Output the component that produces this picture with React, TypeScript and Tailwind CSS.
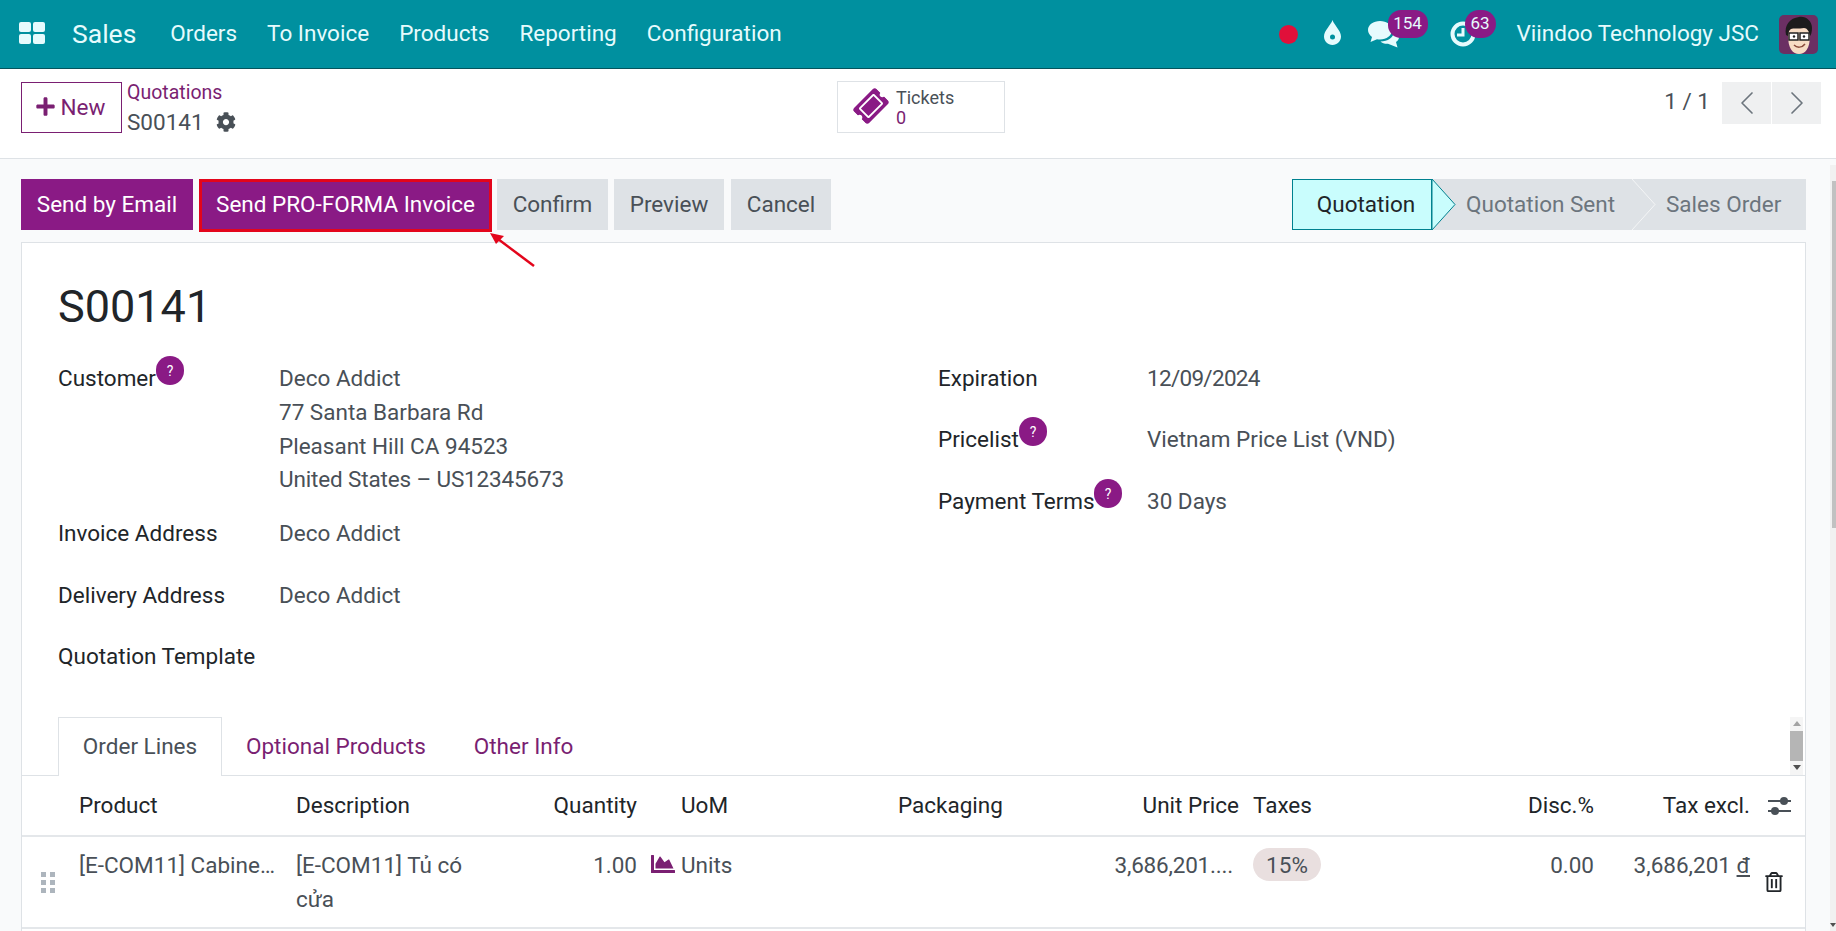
import { ChevronLeft, ChevronRight } from "lucide-react";
import { FaChartArea, FaCog, FaPlus, FaRegTrashAlt, FaTicketAlt } from "react-icons/fa";

const menus = ["Orders", "To Invoice", "Products", "Reporting", "Configuration"];

const columns =
  "grid grid-cols-[49px_217px_252px_105px_245px_170px_187px_254px_101px_156px_1fr]";

const HelpDot = ({ className }: { className: string }) => (
  <span
    className={`absolute flex h-[29px] w-[28px] items-center justify-center rounded-full bg-[#8a1a85] text-[14px] leading-none text-white ${className}`}
  >
    ?
  </span>
);

const Field = ({
  label,
  labelWidth,
  help,
  className,
  children,
}: {
  label: string;
  labelWidth: string;
  help?: string;
  className?: string;
  children?: React.ReactNode;
}) => (
  <div className={`flex h-[35px] leading-[35px] ${className ?? ""}`}>
    <div className={`relative shrink-0 text-[#212529] ${labelWidth}`}>
      {label}
      {help && <HelpDot className={help} />}
    </div>
    <div className="text-[#495057]">{children}</div>
  </div>
);

const AppsIcon = () => (
  <svg width="26" height="23" viewBox="0 0 26 23" fill="#e6fbfd">
    <rect x="0" y="0" width="12" height="10" rx="2" />
    <rect x="14" y="0" width="12" height="10" rx="2" />
    <rect x="0" y="12" width="12" height="10" rx="2" />
    <rect x="14" y="12" width="12" height="10" rx="2" />
  </svg>
);

const DropIcon = () => (
  <svg width="19" height="25" viewBox="0 0 19 25">
    <path
      fill="#e6fbfd"
      d="M9.5 0C11 5 18 10.500 18 16.500 18 21.200 14.200 25 9.500 25S1 21.200 1 16.500C1 10.500 8 5 9.500 0Z"
    />
    <circle cx="9.500" cy="17" r="2.500" fill="#00909f" />
  </svg>
);

const ChatIcon = () => (
  <svg width="32" height="28" viewBox="0 0 32 28" fill="#e6fbfd">
    <path d="M12 1C5.500 1 0 4.800 0 10 0 12.800 1.600 15.200 4 17L2.500 22 9 19.200C10 19.400 11 19.500 12 19.500 18.500 19.500 24 15.500 24 10S18.500 1 12 1Z" />
    <path d="M26 11C26 17.500 19.500 21.500 12.500 21.500 14 23 17 24 20 23.800L29.500 27.500 28 22C30 20.800 31 19 31 17.200 31 14.800 29 12.500 26 11Z" />
  </svg>
);

const ClockIcon = () => (
  <svg width="26" height="26" viewBox="0 0 26 26" fill="none" stroke="#e6fbfd">
    <circle cx="13" cy="13" r="10.500" strokeWidth="4" />
    <path d="M13 7v7H7" strokeWidth="3" />
  </svg>
);

const Avatar = () => (
  <svg width="39" height="39" viewBox="0 0 39 39" className="rounded-[5px]">
    <rect width="39" height="39" fill="#6b2f63" />
    <path d="M9 20C9 34 14 39 20 39S31 34 31 20 9 8 9 20Z" fill="#f7dcc4" />
    <path
      d="M7 20C5 10 11 3 20 2 27 1 33 6 33 13 33 17 32 20 31 21 30 16 28 13 25 13 20 14 14 13 12 14 10 15 9 18 9 21Z"
      fill="#1c1c1c"
    />
    <g fill="#fff" stroke="#222" strokeWidth="1.500">
      <rect x="10" y="18" width="9" height="7" />
      <rect x="21" y="18" width="9" height="7" />
    </g>
    <circle cx="15" cy="21.500" r="1.200" fill="#222" />
    <circle cx="25" cy="21.500" r="1.200" fill="#222" />
    <path d="M15 30C18 33 23 33 26 29" fill="none" stroke="#8a4a3a" strokeWidth="1.500" />
  </svg>
);

const Sliders = () => (
  <svg width="23" height="20" viewBox="0 0 23 20" fill="#495057">
    <rect x="0" y="4" width="23" height="2" />
    <rect x="0" y="14" width="23" height="2" />
    <circle cx="16" cy="5" r="4" />
    <circle cx="7" cy="15" r="4" />
  </svg>
);

const Grip = () => (
  <svg width="14" height="21" viewBox="0 0 14 21" fill="#adb5bd">
    <rect x="0" y="0" width="5" height="5" />
    <rect x="9" y="0" width="5" height="5" />
    <rect x="0" y="8" width="5" height="5" />
    <rect x="9" y="8" width="5" height="5" />
    <rect x="0" y="16" width="5" height="5" />
    <rect x="9" y="16" width="5" height="5" />
  </svg>
);

export default function App() {
  return (
    <div className="flex h-[931px] w-[1836px] flex-col overflow-hidden bg-[#f9fafb] font-['Roboto',sans-serif] text-[22.5px] text-[#212529]">
      {/* top bar */}
      <header className="flex h-[69px] shrink-0 items-center border-b border-[#05545d] bg-[#00909f] text-[#e6fbfd]">
        <div className="ml-[19px] mr-[27px] -mt-[2px]">
          <AppsIcon />
        </div>
        <span className="mr-[34px] text-[26.500px]">Sales</span>
        <nav className="flex gap-[30px]">
          {menus.map((m) => (
            <span key={m}>{m}</span>
          ))}
        </nav>
        <div className="ml-auto flex items-center">
          <span className="mr-[25px] h-[19px] w-[19px] rounded-full bg-[#e0103a]" />
          <span className="mr-[26px] -mt-[3px]">
            <DropIcon />
          </span>
          <span className="relative mr-[50px]">
            <ChatIcon />
            <span className="absolute -top-[10px] left-[20px] flex h-[28px] w-[40px] items-center justify-center rounded-[13px] bg-[#8a1a85] text-[17px]">
              154
            </span>
          </span>
          <span className="relative mr-[41px]">
            <ClockIcon />
            <span className="absolute -top-[11px] left-[15px] flex h-[28px] w-[31px] items-center justify-center rounded-full bg-[#8a1a85] text-[17px]">
              63
            </span>
          </span>
          <span className="mr-[20px]">Viindoo Technology JSC</span>
          <span className="mr-[18px] flex">
            <Avatar />
          </span>
        </div>
      </header>

      {/* control panel */}
      <div className="flex h-[90px] shrink-0 items-start border-b border-[#dee2e6] bg-white pl-[21px] pr-[15px] pt-[13px]">
        <button className="flex h-[51px] w-[101px] items-center justify-center gap-[5px] border border-[#7a1f72] text-[#7a1f72]">
          <FaPlus size={21} className="-mt-[2px] -ml-[3px]" />
          New
        </button>
        <div className="ml-[5px] w-[100px] -mt-[1px]">
          <div className="text-[19.500px] leading-[24px] text-[#7a1f72]">Quotations</div>
          <div className="mt-[3px] flex items-center gap-[12px] whitespace-nowrap leading-[28px] text-[#495057]">
            S00141
            <FaCog size={20} className="shrink-0" />
          </div>
        </div>
        <button className="ml-[610px] -mt-[1px] flex h-[52px] w-[168px] items-center border border-[#dee2e6] pl-[17px] text-left">
          <FaTicketAlt size={32} color="#8a1a85" className="-mt-[2px] -rotate-45" />
          <span className="ml-[9px] mt-[2px] text-[18px] leading-[20px] text-[#495057]">
            Tickets
            <span className="block text-[#7a1f72]">0</span>
          </span>
        </button>
        <span className="ml-auto mr-[12px] mt-[3px] text-[#495057]">1 / 1</span>
        <div className="flex h-[42px] gap-[1px]">
          <span className="flex w-[49px] items-center justify-center bg-[#eff0f1]">
            <ChevronLeft size={40} strokeWidth={1} color="#6c757d" />
          </span>
          <span className="flex w-[49px] items-center justify-center bg-[#eff0f1]">
            <ChevronRight size={40} strokeWidth={1} color="#6c757d" />
          </span>
        </div>
      </div>

      <div className="relative flex-1 px-[21px] pr-[30px] pt-[20px]">
        {/* action buttons and status */}
        <div className="flex h-[51px] items-stretch">
          <button className="w-[172px] bg-[#8a1a85] text-white">Send by Email</button>
          <button className="ml-[6px] h-[53px] w-[293px] border-[3px] border-[#e3051b] bg-[#8a1a85] pb-[2px] text-white">
            Send PRO-FORMA Invoice
          </button>
          <button className="ml-[5px] w-[111px] bg-[#dee2e6] text-[#495057]">Confirm</button>
          <button className="ml-[6px] w-[110px] bg-[#dee2e6] text-[#495057]">Preview</button>
          <button className="ml-[7px] w-[100px] bg-[#dee2e6] text-[#495057]">Cancel</button>
          <div className="relative ml-auto flex w-[514px] items-center bg-[#dee2e6] text-[#6c757d]">
            <span className="flex h-full w-[140px] items-center justify-center border border-[#00818f] bg-[#c9fdfd] pl-[8px] text-[#212529]">
              Quotation
            </span>
            <svg width="24" height="51" viewBox="0 0 24 51" className="shrink-0">
              <path d="M0 0L23 25.500 0 51Z" fill="#c9fdfd" stroke="#00818f" />
            </svg>
            <span className="ml-[10px] w-[200px]">Quotation Sent</span>
            <svg width="24" height="51" viewBox="0 0 24 51" className="absolute left-[340px] top-0">
              <path d="M0 0L23 25.500 0 51" fill="none" stroke="#f4f5f6" />
            </svg>
            <span>Sales Order</span>
          </div>
        </div>

        {/* sheet */}
        <main className="mt-[12px] h-[800px] border border-[#dee2e6] bg-white">
          <h1 className="ml-[36px] mt-[34px] text-[45px] leading-[60px]">S00141</h1>

          <div className="mt-[24px] flex h-[356px] pl-[36px]">
            <div className="w-[880px] shrink-0">
              <Field label="Customer" labelWidth="w-[221px]" help="left-[98px] -top-[5px]">
                Deco Addict
              </Field>
              <div className="ml-[221px] leading-[33.500px] text-[#495057]">
                <div>77 Santa Barbara Rd</div>
                <div>Pleasant Hill CA 94523</div>
                <div className="tracking-[-0.15px]">United States – US12345673</div>
              </div>
              <Field label="Invoice Address" labelWidth="w-[221px]" className="mt-[19px]">
                Deco Addict
              </Field>
              <Field label="Delivery Address" labelWidth="w-[221px]" className="mt-[27px]">
                Deco Addict
              </Field>
              <Field label="Quotation Template" labelWidth="w-[221px]" className="mt-[26px]" />
            </div>
            <div className="flex-1">
              <Field label="Expiration" labelWidth="w-[209px]">
                <span className="tracking-[-0.7px]">12/09/2024</span>
              </Field>
              <Field label="Pricelist" labelWidth="w-[209px]" help="left-[81px] -top-[5px]" className="mt-[26px]">
                Vietnam Price List (VND)
              </Field>
              <Field label="Payment Terms" labelWidth="w-[209px]" help="left-[156px] -top-[5px]" className="mt-[27px]">
                30 Days
              </Field>
            </div>
          </div>

          {/* tabs */}
          <div className="relative flex h-[59px] items-stretch border-b border-[#dee2e6] pl-[36px]">
            <span className="-mb-[1px] flex w-[164px] items-center justify-center border border-b-0 border-[#dee2e6] bg-white text-[#495057]">
              Order Lines
            </span>
            <span className="ml-[24px] flex items-center pt-[1px] text-[#7a1f72]">Optional Products</span>
            <span className="ml-[48px] flex items-center pt-[1px] text-[#7a1f72]">Other Info</span>
            <div className="absolute right-[2px] top-0 flex h-[58px] w-[13px] flex-col items-center bg-[#f5f5f5]">
              <span className="mt-[4px] h-0 w-0 border-x-[4px] border-b-[5px] border-x-transparent border-b-[#a3a3a3]" />
              <span className="mt-[5px] h-[30px] w-full bg-[#b5b5b5]" />
              <span className="mt-[4px] h-0 w-0 border-x-[4px] border-t-[5px] border-x-transparent border-t-[#505050]" />
            </div>
          </div>

          {/* order lines */}
          <div className={`${columns} h-[61px] items-center border-b-2 border-[#e4e7ea]`}>
            <span />
            <span className="px-2">Product</span>
            <span className="px-2">Description</span>
            <span className="px-2 text-right">Quantity</span>
            <span className="pl-[36px]">UoM</span>
            <span className="pl-2">Packaging</span>
            <span className="px-2 text-right">Unit Price</span>
            <span className="pl-[6px]">Taxes</span>
            <span className="px-2 text-right">Disc.%</span>
            <span className="px-2 text-right">Tax excl.</span>
            <span className="pl-[10px]">
              <Sliders />
            </span>
          </div>
          <div className={`${columns} h-[92px] border-b-2 border-[#e4e7ea] leading-[34px] text-[#495057]`}>
            <span className="pl-[19px] pt-[35px]">
              <Grip />
            </span>
            <span className="truncate pl-2 pr-[13px] pt-[11px]">[E-COM11] Cabinet with Doors</span>
            <span className="pl-2 pr-[50px] pt-[11px]">[E-COM11] Tủ có cửa</span>
            <span className="px-2 pt-[11px] text-right">1.00</span>
            <span className="flex items-start pl-[6px] pt-[11px]">
              <FaChartArea size={24} color="#7a1f72" className="mr-[6px] mt-[4px]" />
              Units
            </span>
            <span />
            <span className="whitespace-nowrap pr-[14px] pt-[11px] text-right tracking-[-0.2px]">3,686,201....</span>
            <span className="pl-[6px] pt-[11px]">
              <span className="flex h-[33px] w-[68px] items-center justify-center rounded-[17px] bg-[#e9dfdf] text-[#495057]">
                15%
              </span>
            </span>
            <span className="px-2 pt-[11px] text-right">0.00</span>
            <span className="whitespace-nowrap px-2 pt-[11px] text-right">
              3,686,201 <span className="underline">đ</span>
            </span>
            <span className="pl-[6px] pt-[35px]">
              <FaRegTrashAlt size={20} color="#212529" />
            </span>
          </div>
        </main>

        {/* page scrollbar */}
        <div className="absolute right-0 top-[6px] flex h-[766px] w-[6px] flex-col items-end justify-between bg-[#f1f1f1]">
          <span className="mt-[16px] h-[347px] w-[4px] bg-[#c1c1c1]" />
          <span className="mb-[4px] h-0 w-0 border-x-[3px] border-t-[4px] border-x-transparent border-t-[#505050]" />
        </div>
      </div>

      {/* annotation arrow */}
      <svg width="50" height="40" viewBox="0 0 50 40" className="absolute left-[488px] top-[231px]">
        <path d="M46 35L6 5" stroke="#e3051b" strokeWidth="2.500" />
        <path d="M2 2L16 5 8 13Z" fill="#e3051b" />
      </svg>
    </div>
  );
}
